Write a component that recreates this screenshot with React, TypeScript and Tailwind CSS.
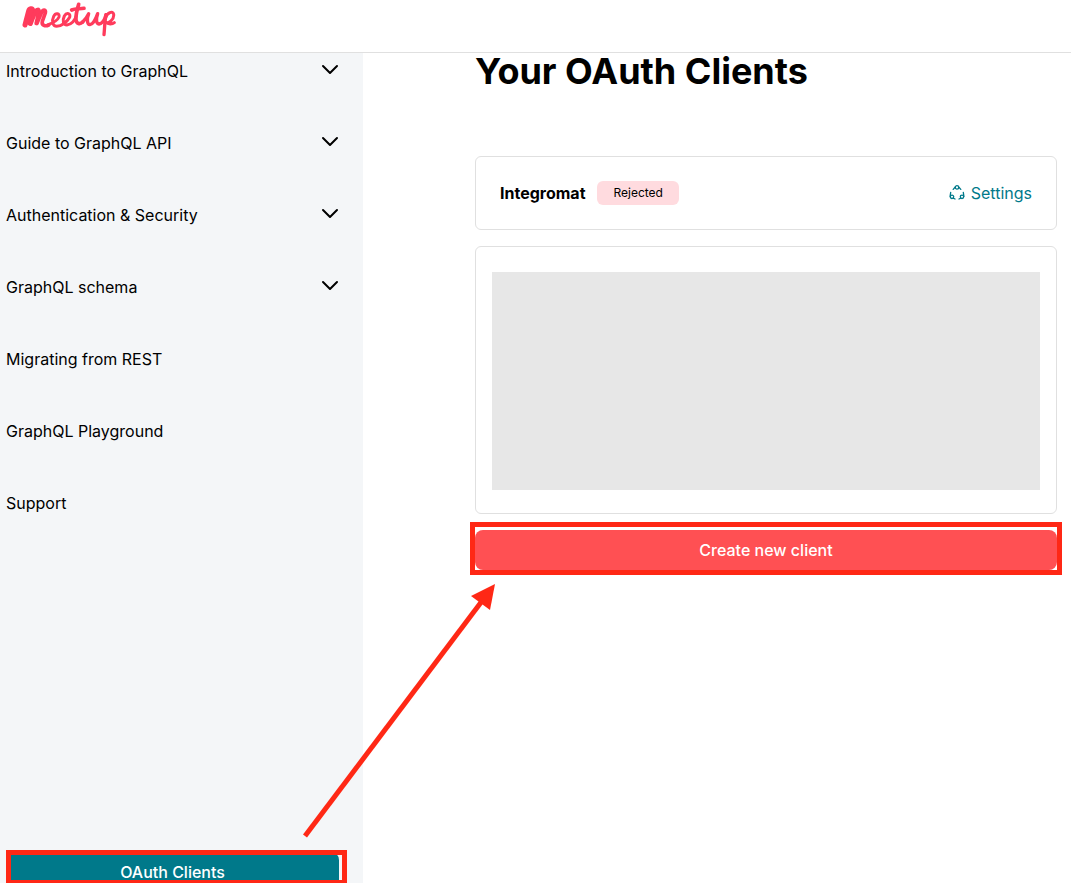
import { useState } from 'react';

type NavItem = { label: string; expandable?: boolean };

const navItems: NavItem[] = [
  { label: 'Introduction to GraphQL', expandable: true },
  { label: 'Guide to GraphQL API', expandable: true },
  { label: 'Authentication & Security', expandable: true },
  { label: 'GraphQL schema', expandable: true },
  { label: 'Migrating from REST' },
  { label: 'GraphQL Playground' },
  { label: 'Support' },
];

const MeetupLogo = () => (
  <svg
    viewBox="66 8 282 105"
    className="h-[35px] w-[94px]"
    fill="none"
    stroke="#ff3b5c"
    strokeLinecap="round"
    strokeLinejoin="round"
    role="img"
    aria-label="Meetup"
  >
    <path strokeWidth="15" d="M75 77 L86 35 C88 27 97 26 98 33 L96 42 L90 72" />
    <path strokeWidth="12" d="M92 74 L106 38 C109 29 118 28 117 38 L109 72" />
    <path strokeWidth="11" d="M111 72 L125 39 C128 30 139 29 136 41 L127 66 C124 78 136 82 146 77" />
    <path strokeWidth="9" d="M145 76 C156 72 172 64 177 53 C180 42 167 39 161 51 C154 66 158 81 170 81 C184 81 202 67 209 54 C213 42 200 38 193 50 C187 63 189 77 201 77 C214 76 225 63 229 50" />
    <path strokeWidth="11" d="M236 15 C231 31 227 48 228 61 C229 74 240 76 248 68" />
    <path strokeWidth="11" d="M215 32 C227 26 240 30 252 27" />
    <path strokeWidth="10" d="M248 68 C256 60 262 52 266 43 C261 56 260 76 270 76 C281 75 288 57 293 43 C288 58 288 73 297 74 C306 73 314 61 318 46" />
    <path strokeWidth="10" d="M318 46 C314 66 314 86 312 106" />
    <path strokeWidth="9" d="M316 58 C321 39 339 33 341 45 C343 60 326 75 316 68 C325 76 337 75 343 70" />
  </svg>
);

const ChevronIcon = () => (
  <svg viewBox="0 0 18 18" className="h-[18px] w-[18px]" fill="none" stroke="black" strokeWidth="2" strokeLinecap="round" strokeLinejoin="round" aria-hidden="true">
    <path d="M2 4 L9 11 L16 4" />
  </svg>
);

const SettingsIcon = () => (
  <svg viewBox="0 0 16 16" className="h-4 w-4" fill="none" stroke="#00798a" strokeWidth="1.3" strokeLinecap="round" aria-hidden="true">
    <circle cx="8" cy="2.4" r="1.7" />
    <circle cx="3" cy="11.8" r="1.7" />
    <circle cx="13" cy="11.8" r="1.7" />
    <path d="M4.2 4.4 L6.3 2 M9.7 2 L11.8 4.4 M1.7 7.4 L1.1 11.4 M14.3 7.4 L14.9 11.4 M4.2 13.2 L6 14 M11.8 13.2 L10 14" />
  </svg>
);

const Sidebar = () => {
  const [openItem, setOpenItem] = useState<string | null>(null);

  return (
    <aside className="relative flex w-[363px] shrink-0 flex-col overflow-hidden bg-[#f4f6f8]">
      <nav className="flex flex-1 flex-col gap-9 pl-1.5 pr-6">
        {navItems.map((item) =>
          item.expandable ? (
            <button
              key={item.label}
              type="button"
              aria-expanded={openItem === item.label}
              onClick={() => setOpenItem(openItem === item.label ? null : item.label)}
              className="flex h-9 items-center justify-between text-left"
            >
              {item.label}
              <ChevronIcon />
            </button>
          ) : (
            <a key={item.label} href="#" className="flex h-9 items-center">
              {item.label}
            </a>
          )
        )}
      </nav>
      {/* the button runs past the bottom edge of the sidebar */}
      <div className="-mb-[9px] pl-1.5 pr-6">
        <button type="button" className="h-10 w-full rounded-lg bg-[#00798a] font-medium text-white">
          OAuth Clients
        </button>
      </div>
      <div className="pointer-events-none absolute bottom-0 left-1.5 right-4 h-[33px] border-[5px] border-b-[3px] border-[#ff2815]" />
    </aside>
  );
};

const ClientList = () => (
  <main className="min-w-0 flex-1 pl-28 pr-3.5">
    <h1 className="mb-[67px] text-4xl leading-9 font-bold">Your OAuth Clients</h1>
    <div className="flex flex-col gap-4">
      <section className="flex items-center justify-between rounded-md border border-[#e0e0e0] p-6">
        <div className="flex items-center gap-3">
          <h2 className="font-bold">Integromat</h2>
          <span className="rounded-md bg-[#ffdbdf] px-4 text-xs leading-6">Rejected</span>
        </div>
        <a href="#" className="flex items-center gap-1.5 text-[#00798a]">
          <SettingsIcon />
          Settings
        </a>
      </section>
      <section className="rounded-md border border-[#e0e0e0] px-4 pt-[25px] pb-[23px]">
        <div className="h-[218px] bg-[#e7e7e7]" />
      </section>
      <div className="relative">
        <button type="button" className="block h-10 w-full rounded-lg bg-[#ff5053] font-medium text-white">
          Create new client
        </button>
        <div className="pointer-events-none absolute -inset-x-[5px] -top-2 -bottom-[5px] border-[5px] border-[#ff2815]" />
      </div>
    </div>
  </main>
);

const App = () => (
  <div className="relative flex min-h-screen flex-col bg-white font-['Inter','Liberation_Sans',sans-serif] text-base text-black">
    <header className="h-[53px] border-b border-[#e0e0e0] pt-0.5 pl-[22px]">
      <a href="#" className="inline-block">
        <MeetupLogo />
      </a>
    </header>
    <div className="flex flex-1">
      <Sidebar />
      <ClientList />
    </div>
    <svg
      viewBox="0 0 194 256"
      className="pointer-events-none absolute top-[583px] left-[302px] h-64 w-[194px]"
      aria-hidden="true"
    >
      <path d="M3 253 L180 18" stroke="#ff2815" strokeWidth="5" />
      <path d="M193 1 L169 13 L188 27 Z" fill="#ff2815" />
    </svg>
  </div>
);

export default App;
